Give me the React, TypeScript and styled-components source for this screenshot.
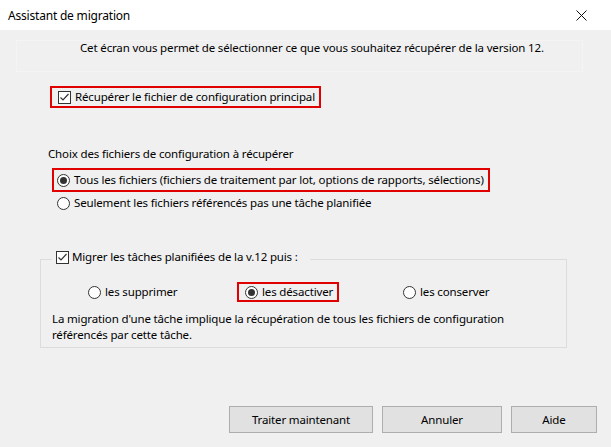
import React from "react";
import styled, { createGlobalStyle } from "styled-components";

const Global = createGlobalStyle`
  html, body {
    margin: 0;
    padding: 0;
    background: #f0f0f0;
  }
  body {
    font-family: "Noto Sans", "Liberation Sans", sans-serif;
    font-size: 11.5px;
    letter-spacing: -0.15px;
    color: #000;
  }
`;

const Window = styled.div`
  width: 611px;
  height: 447px;
  display: flex;
  flex-direction: column;
  background: #f0f0f0;
  overflow: hidden;
`;

const TitleBar = styled.div`
  height: 30px;
  flex: none;
  background: #fff;
  display: flex;
  align-items: center;
  justify-content: space-between;
  padding: 0 24px 0 8px;
`;

const Title = styled.span`
  font-size: 12px;
  letter-spacing: -0.2px;
`;

const Body = styled.div`
  flex: 1;
  display: flex;
  flex-direction: column;
  padding: 10px 0 14px 0;
`;

const Intro = styled.div`
  margin: 0 28px 0 16px;
  height: 32px;
  border: 1px solid #f4f4f4;
  padding: 0 0 0 63px;
  line-height: 14px;
  white-space: nowrap;
  box-sizing: border-box;
`;

const Section = styled.div<{ $top: number }>`
  display: flex;
  flex-direction: column;
  align-items: flex-start;
  margin-top: ${(p) => p.$top}px;
  padding-left: 48px;
`;

const Label = styled.div`
  line-height: 16px;
  height: 16px;
  white-space: nowrap;
`;

const Option = styled.label<{ $marked?: boolean; $pad?: number; $h?: number }>`
  display: inline-flex;
  align-items: center;
  gap: 4px;
  height: ${(p) => p.$h ?? 24}px;
  box-sizing: border-box;
  border: 2px solid ${(p) => (p.$marked ? "#e00000" : "transparent")};
  padding: 0 4px 0 ${(p) => p.$pad ?? 3}px;
  white-space: nowrap;
  line-height: 16px;
`;

const Box = styled.span`
  width: 13px;
  height: 13px;
  flex: none;
  box-sizing: border-box;
  border: 1px solid #333;
  background: #fff;
  display: inline-flex;
  align-items: center;
  justify-content: center;
`;

const Radio = styled.span<{ $on?: boolean }>`
  width: 13px;
  height: 13px;
  flex: none;
  box-sizing: border-box;
  border: 1px solid #333;
  border-radius: 50%;
  background: #fff;
  display: inline-flex;
  align-items: center;
  justify-content: center;

  &::after {
    content: "";
    width: 7px;
    height: 7px;
    border-radius: 50%;
    background: ${(p) => (p.$on ? "#333" : "transparent")};
  }
`;

const Group = styled.fieldset`
  margin: 0 44px 0 40px;
  padding: 0 14px 4px 11px;
  border: 1px solid #dcdcdc;
  min-width: 0;
`;

const Legend = styled.legend`
  padding: 0 12px 4px 4px;
  margin: 0;
  display: flex;
  align-items: center;
  gap: 3px;
  line-height: 16px;
  white-space: nowrap;
`;

const RadioRow = styled.div`
  display: flex;
  align-items: center;
  margin-top: 13px;
  height: 20px;
`;

const Slot = styled.div<{ $w: number; $indent?: number }>`
  width: ${(p) => p.$w}px;
  padding-left: ${(p) => p.$indent ?? 0}px;
  box-sizing: border-box;
  display: flex;
`;

const Note = styled.p`
  margin: 9px 0 0 0;
  line-height: 16px;
`;

const Buttons = styled.div`
  margin-top: auto;
  display: flex;
  justify-content: flex-end;
  gap: 9px;
  padding-right: 14px;
`;

const Button = styled.button<{ $w: number }>`
  width: ${(p) => p.$w}px;
  height: 27px;
  background: #e1e1e1;
  border: 1px solid #adadad;
  font-family: inherit;
  font-size: 11.5px;
  letter-spacing: -0.15px;
  color: #000;
  padding: 0;
`;

const Check = () => (
  <Box>
    <svg width="11" height="11" viewBox="0 0 11 11">
      <polyline points="1.5,5.5 4,8 9.5,2" fill="none" stroke="#333" strokeWidth="1.2" />
    </svg>
  </Box>
);

const Close = () => (
  <svg width="11" height="11" viewBox="0 0 11 11">
    <path d="M0.5 0.5 L10.5 10.5 M10.5 0.5 L0.5 10.5" stroke="#111" strokeWidth="1" />
  </svg>
);

export default function App() {
  return (
    <Window>
      <Global />
      <TitleBar>
        <Title>Assistant de migration</Title>
        <Close />
      </TitleBar>
      <Body>
        <Intro>Cet écran vous permet de sélectionner ce que vous souhaitez récupérer de la version 12.</Intro>

        <Section $top={14}>
          <Option $marked $pad={6} $h={22} style={{ marginLeft: 2 }}>
            <Check />
            Récupérer le fichier de configuration principal
          </Option>
        </Section>

        <Section $top={38}>
          <Label>Choix des fichiers de configuration à récupérer</Label>
          <Option $marked style={{ marginTop: 6, marginLeft: 4 }}>
            <Radio $on />
            Tous les fichiers (fichiers de traitement par lot, options de rapports, sélections)
          </Option>
          <Option $h={22} style={{ marginLeft: 4 }}>
            <Radio />
            Seulement les fichiers référencés pas une tâche planifiée
          </Option>
        </Section>

        <div style={{ height: 35 }} />

        <Group>
          <Legend>
            <Check />
            Migrer les tâches planifiées de la v.12 puis :
          </Legend>
          <RadioRow>
            <Slot $w={185} $indent={31}>
              <Option $h={20}>
                <Radio />
                les supprimer
              </Option>
            </Slot>
            <Slot $w={161}>
              <Option $marked $h={20} $pad={6}>
                <Radio $on />
                les désactiver
              </Option>
            </Slot>
            <Slot $w={120}>
              <Option $h={20}>
                <Radio />
                les conserver
              </Option>
            </Slot>
          </RadioRow>
          <Note>
            La migration d'une tâche implique la récupération de tous les fichiers de configuration
            <br />
            référencés par cette tâche.
          </Note>
        </Group>

        <Buttons>
          <Button $w={144}>Traiter maintenant</Button>
          <Button $w={120}>Annuler</Button>
          <Button $w={86}>Aide</Button>
        </Buttons>
      </Body>
    </Window>
  );
}
